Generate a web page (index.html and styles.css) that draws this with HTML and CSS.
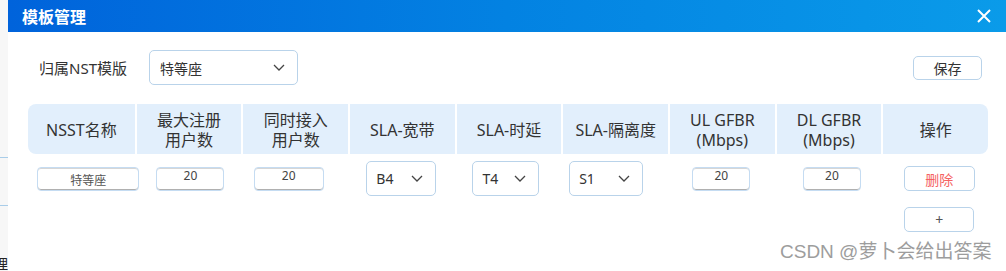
FILE: index.html
```html
<!DOCTYPE html>
<html lang="zh">
<head>
    <meta charset="UTF-8">
    <title>模板管理</title>
    <link rel="stylesheet" href="styles.css">
</head>
<body>

<div class="backdrop">
    <div class="backdrop-line"></div>
    <div class="backdrop-line second"></div>
    <div class="backdrop-text"><span>管理</span></div>
</div>

<div class="modal">
    <div class="modal-head">
        <span class="modal-title">模板管理</span>
        <svg class="close" width="16" height="14" viewBox="0 0 16 14">
            <path d="M2 1 L14 13 M14 1 L2 13" stroke="#fff" stroke-width="2" fill="none"/>
        </svg>
    </div>

    <div class="modal-body">
        <div class="toolbar">
            <span class="label">归属NST模版</span>
            <div class="select big">
                <span>特等座</span>
                <svg width="12" height="7" viewBox="0 0 12 7"><polyline points="1,1 6,6 11,1" fill="none" stroke="#444" stroke-width="1.3"/></svg>
            </div>
            <button class="btn save">保存</button>
        </div>

        <div class="thead">
            <div class="th">NSST名称</div>
            <div class="th">最大注册<br>用户数</div>
            <div class="th">同时接入<br>用户数</div>
            <div class="th">SLA-宽带</div>
            <div class="th">SLA-时延</div>
            <div class="th">SLA-隔离度</div>
            <div class="th">UL GFBR<br>(Mbps)</div>
            <div class="th">DL GFBR<br>(Mbps)</div>
            <div class="th">操作</div>
        </div>

        <div class="row">
            <div class="td"><div class="field name">特等座</div></div>
            <div class="td"><div class="field num reg">20</div></div>
            <div class="td"><div class="field num conn">20</div></div>
            <div class="td">
                <div class="select small">
                    <span>B4</span>
                    <svg width="12" height="7" viewBox="0 0 12 7"><polyline points="1,1 6,6 11,1" fill="none" stroke="#444" stroke-width="1.3"/></svg>
                </div>
            </div>
            <div class="td">
                <div class="select small t4">
                    <span>T4</span>
                    <svg width="12" height="7" viewBox="0 0 12 7"><polyline points="1,1 6,6 11,1" fill="none" stroke="#444" stroke-width="1.3"/></svg>
                </div>
            </div>
            <div class="td">
                <div class="select small s1">
                    <span>S1</span>
                    <svg width="12" height="7" viewBox="0 0 12 7"><polyline points="1,1 6,6 11,1" fill="none" stroke="#444" stroke-width="1.3"/></svg>
                </div>
            </div>
            <div class="td"><div class="field num ul">20</div></div>
            <div class="td"><div class="field num dl">20</div></div>
            <div class="td"><button class="btn del">删除</button></div>
        </div>

        <div class="row add-row">
            <div class="td"></div><div class="td"></div><div class="td"></div>
            <div class="td"></div><div class="td"></div><div class="td"></div>
            <div class="td"></div><div class="td"></div>
            <div class="td"><button class="btn add">+</button></div>
        </div>
    </div>

    <div class="watermark">CSDN @萝卜会给出答案</div>
</div>

</body>
</html>
```

FILE: styles.css
```css
html, body {
    margin: 0;
    padding: 0;
}
body {
    width: 1006px;
    height: 271px;
    overflow: hidden;
    display: flex;
    font-family: "Noto Sans", "Noto Sans CJK SC", sans-serif;
    color: #333;
    background-color: #fff;
}
.backdrop {
    width: 8px;
    flex-shrink: 0;
    background-color: #f7f7f7;
    display: flex;
    flex-direction: column;
    padding-top: 157px;
    box-sizing: border-box;
    overflow: hidden;
}
.backdrop-line {
    height: 1px;
    background-color: #a9cde9;
}
.backdrop-line.second {
    margin-top: 47px;
}
.backdrop-text {
    margin-top: auto;
    height: 14px;
    display: flex;
    justify-content: flex-end;
    overflow: hidden;
    font-size: 14px;
    line-height: 14px;
    color: #222;
    white-space: nowrap;
}
.modal {
    flex: 1;
    position: relative;
    display: flex;
    flex-direction: column;
}
.modal-head {
    height: 32px;
    flex-shrink: 0;
    display: flex;
    align-items: center;
    justify-content: space-between;
    padding: 0 14px 0 14px;
    background: linear-gradient(90deg, #0063db, #0382e2 50%, #0a9be9);
}
.modal-title {
    color: #fff;
    font-family: "Noto Sans CJK SC", sans-serif;
    font-size: 16px;
    font-weight: bold;
}
.close {
    display: block;
    margin-top: -1px;
}
.modal-body {
    padding: 18px 18px 0 20px;
}
.toolbar {
    display: flex;
    align-items: center;
    height: 35px;
}
.label {
    margin-left: 11px;
    width: 94px;
    flex-shrink: 0;
    white-space: nowrap;
    font-size: 15px;
    color: #333;
}
.select {
    display: flex;
    align-items: center;
    justify-content: space-between;
    box-sizing: border-box;
    border: 1px solid #b9d3ea;
    border-radius: 5px;
    background-color: #fff;
    color: #333;
}
.select.big {
    margin-left: 16px;
    width: 149px;
    height: 35px;
    padding: 0 12px 0 10px;
    font-size: 14px;
}
.select.small {
    width: 70px;
    height: 35px;
    padding: 0 12px 0 9px;
    font-size: 14px;
}
.select.t4 {
    width: 67px;
    margin-left: -4px;
}
.select.s1 {
    width: 74px;
    margin-right: 17px;
}
.btn {
    font-family: "Noto Sans", "Noto Sans CJK SC", sans-serif;
    box-sizing: border-box;
    background-color: #fff;
    border: 1px solid #b9d3ea;
    border-radius: 5px;
    cursor: pointer;
    padding: 0;
}
.save {
    margin-left: auto;
    margin-right: 6px;
    width: 69px;
    height: 24px;
    font-size: 14px;
    color: #333;
}
.thead {
    margin-top: 19px;
    display: grid;
    grid-template-columns: repeat(9, minmax(0, 1fr));
    height: 50px;
    background-color: #e2effc;
    border-radius: 8px;
    overflow: hidden;
}
.th {
    display: flex;
    align-items: center;
    justify-content: center;
    text-align: center;
    padding-top: 2px;
    font-size: 16px;
    line-height: 20px;
    color: #333;
    border-left: 2px solid #fff;
}
.th:first-child {
    border-left: none;
}
.row {
    margin-top: 7px;
    display: grid;
    grid-template-columns: repeat(9, minmax(0, 1fr));
    height: 35px;
}
.td {
    display: flex;
    align-items: center;
    justify-content: center;
}
.field {
    flex-shrink: 0;
    box-sizing: border-box;
    height: 24px;
    border: 1px solid #c5dcf2;
    border-radius: 4px;
    box-shadow: inset 0 1px 0 #d6d6d6, inset 0 -1px 0 #b0b0b0;
    font-size: 12px;
    color: #444;
    text-align: center;
}
.field.name {
    width: 102px;
    margin-left: 14px;
    line-height: 26px;
    color: #555;
}
.field.num {
    width: 68px;
    line-height: 16px;
}
.field.reg {
    margin-left: 5px;
}
.field.conn {
    width: 70px;
    margin-left: -12px;
}
.field.ul {
    width: 58px;
}
.field.dl {
    width: 58px;
    margin-left: 8px;
}
.del {
    width: 71px;
    height: 25px;
    margin-left: 9px;
    font-size: 14px;
    color: #f56262;
}
.add-row {
    margin-top: 11px;
    height: 25px;
}
.add {
    width: 70px;
    height: 25px;
    margin-left: 9px;
    font-size: 14px;
    color: #555;
}
.watermark {
    position: absolute;
    left: 772px;
    top: 236px;
    font-family: "Liberation Sans", "Noto Sans CJK SC", sans-serif;
    font-size: 19px;
    color: #9d9d9d;
    text-shadow: 0 0 2px #fff;
    white-space: nowrap;
}
```
